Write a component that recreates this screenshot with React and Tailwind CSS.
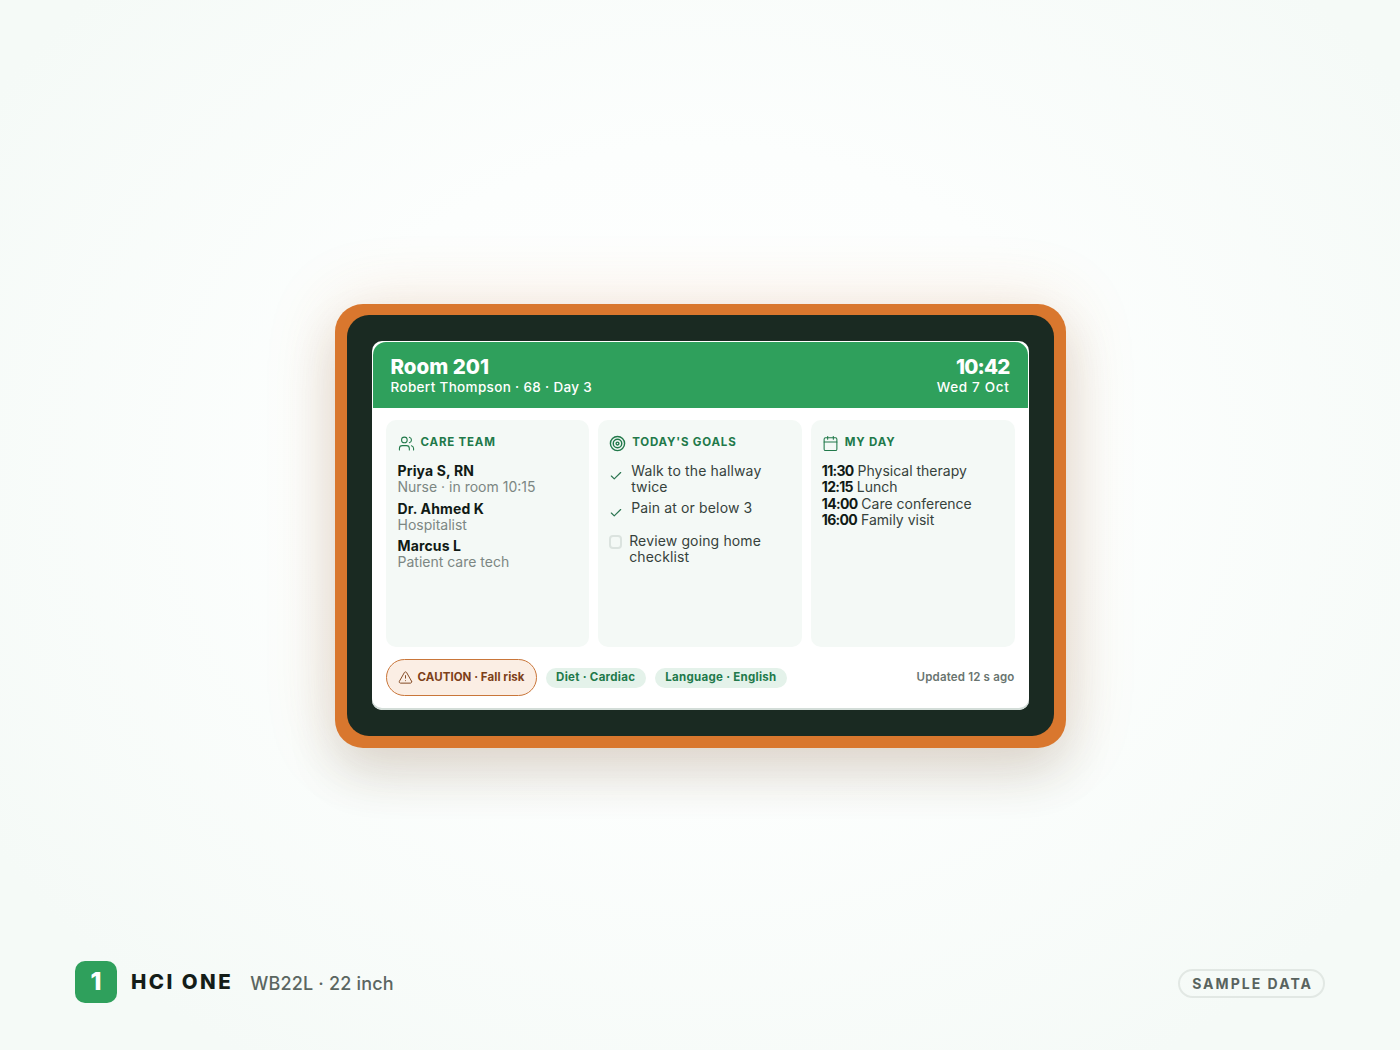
import { Users, Target, Check, Calendar, TriangleAlert } from 'lucide-react';

const team = [
  { name: 'Priya S, RN', role: 'Nurse · in room 10:15' },
  { name: 'Dr. Ahmed K', role: 'Hospitalist' },
  { name: 'Marcus L', role: 'Patient care tech' },
];

const schedule = [
  { time: '11:30', label: 'Physical therapy' },
  { time: '12:15', label: 'Lunch' },
  { time: '14:00', label: 'Care conference' },
  { time: '16:00', label: 'Family visit' },
];

const PanelTitle = ({ icon: Icon, strokeWidth = 1.5, children }) => (
  <div className="flex items-center gap-[6px] h-[16px]">
    <Icon size={17} strokeWidth={strokeWidth} className="text-[#21794a] shrink-0 mt-[2px]" />
    <h3 className="text-[11.5px] font-bold tracking-[0.07em] text-[#21794a] leading-[16px]">{children}</h3>
  </div>
);

const Chip = ({ children }) => (
  <span className="rounded-full bg-[#e4f2ea] text-[#21794a] text-[11.5px] font-bold tracking-[0.025em] px-[10.5px] h-[20px] flex items-center">
    {children}
  </span>
);

export default function App() {
  return (
    <div
      className="h-[1050px] flex flex-col overflow-hidden bg-[radial-gradient(ellipse_at_50%_45%,#ffffff_0%,#fcfefd_40%,#f5faf7_85%)] pt-[304px] pb-[47px] px-[75px]"
      style={{ fontFamily: 'Inter, "Open Sans", sans-serif' }}
    >
      <div className="self-center w-[731px] h-[444px] rounded-[28px] bg-[#d9772e] pt-[11px] px-[12px] pb-[12px] shadow-[0_0_70px_rgba(224,124,50,0.18),0_26px_50px_rgba(40,40,30,0.14)]">
        <div className="h-full rounded-[22px] bg-[#1a2a22] px-[25px] pt-[26px]">
          <div className="w-[657px] h-[369px] rounded-[10px] bg-white p-px flex flex-col shadow-[inset_0_-2px_0_#d3ddd8]">
            <header className="h-[66px] rounded-t-[13px] bg-[#2fa05c] text-white flex justify-between px-[17px] pt-[13px]">
              <div className="pl-[1px]">
                <div className="text-[20.5px] font-extrabold leading-[24px]">Room 201</div>
                <div className="text-[13.5px] font-medium leading-[17px] tracking-[0.025em]">Robert Thompson · 68 · Day 3</div>
              </div>
              <div className="text-right pr-[1px]">
                <div className="text-[20.5px] font-extrabold leading-[24px] tracking-[-0.04em]">10:42</div>
                <div className="text-[13.5px] font-medium leading-[17px] tracking-[0.05em]">Wed 7 Oct</div>
              </div>
            </header>

            <div className="grid grid-cols-3 gap-[9px] px-[13px] pt-[12px] h-[239px]">
              <section className="rounded-[10px] bg-[#f4f9f6] px-[12px] pt-[14px]">
                <PanelTitle icon={Users}>CARE TEAM</PanelTitle>
                <div className="mt-[13px] flex flex-col gap-[5px]">
                  {team.map((person) => (
                    <div key={person.name} className="leading-[16.3px] text-[14px]">
                      <div className="font-bold text-[#101a15] tracking-[0.01em]">{person.name}</div>
                      <div className="text-[#7c8783]">{person.role}</div>
                    </div>
                  ))}
                </div>
              </section>

              <section className="rounded-[10px] bg-[#f4f9f6] px-[11px] pt-[14px]">
                <PanelTitle icon={Target} strokeWidth={2}>TODAY'S GOALS</PanelTitle>
                <ul className="mt-[13px] text-[14px] text-[#36423c] leading-[16.3px] tracking-[0.01em]">
                  <li className="flex gap-[8px]">
                    <Check size={14} strokeWidth={2} className="text-[#2b7550] shrink-0 mt-[6px]" />
                    <span className="w-[145px]">Walk to the hallway twice</span>
                  </li>
                  <li className="flex gap-[8px] mt-[4px]">
                    <Check size={14} strokeWidth={2} className="text-[#2b7550] shrink-0 mt-[6px]" />
                    <span>Pain at or below 3</span>
                  </li>
                  <li className="flex gap-[7px] mt-[13px]">
                    <span className="w-[13px] h-[14px] mt-[2px] rounded-[4px] border-2 border-[#dbe3df] shrink-0" />
                    <span className="w-[145px]">Review going home checklist</span>
                  </li>
                </ul>
              </section>

              <section className="rounded-[10px] bg-[#f4f9f6] px-[11px] pt-[14px]">
                <PanelTitle icon={Calendar}>MY DAY</PanelTitle>
                <div className="mt-[13px] text-[14px] text-[#36423c] leading-[16.3px]">
                  {schedule.map((item) => (
                    <div key={item.time}>
                      <b className="font-bold text-[#101a15] tracking-[-0.05em]">{item.time}</b> {item.label}
                    </div>
                  ))}
                </div>
              </section>
            </div>

            <footer className="flex items-center gap-[9px] px-[13px] pt-[12px]">
              <span className="h-[37px] rounded-full border border-[#c9763a] bg-[#fbeee4] text-[#7d4019] text-[11.5px] font-bold tracking-[0.005em] px-[11px] flex items-center gap-[5px]">
                <TriangleAlert size={15} strokeWidth={1.5} />
                CAUTION · Fall risk
              </span>
              <Chip>Diet · Cardiac</Chip>
              <Chip>Language · English</Chip>
              <span className="ml-auto text-[11.5px] font-semibold tracking-[0.015em] text-[#69746f]">Updated 12 s ago</span>
            </footer>
          </div>
        </div>
      </div>

      <div className="mt-auto flex items-center justify-between">
        <div className="flex items-center">
          <div className="w-[42px] h-[42px] rounded-[10px] bg-[#2fa05c] text-white text-[25px] font-extrabold flex items-center justify-center">
            1
          </div>
          <div className="ml-[14px] text-[20.5px] font-extrabold tracking-[0.12em] text-[#141d18]">HCI ONE</div>
          <div className="ml-[17px] mt-[2px] text-[18px] font-medium tracking-[0.01em] text-[#5b6661]">WB22L · 22 inch</div>
        </div>
        <div className="h-[29px] mt-[2px] rounded-full border-2 border-[#e2e8e4] pl-[12px] pr-[10px] flex items-center text-[14px] font-bold tracking-[0.145em] text-[#59635e]">
          SAMPLE DATA
        </div>
      </div>
    </div>
  );
}
